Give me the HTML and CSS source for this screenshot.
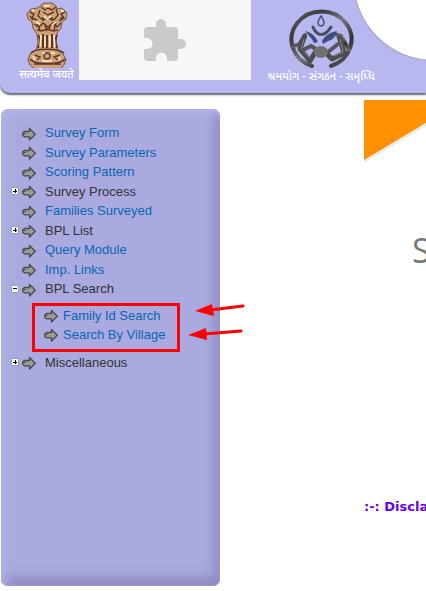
FILE: index.html
```html
<!DOCTYPE html>
<html lang="en">

<head>
  <meta charset="UTF-8">
  <meta name="viewport" content="width=device-width, initial-scale=1.0">
  <title>BPL Survey</title>
  <link rel="stylesheet" href="styles.css">
</head>

<body>
  <!-- shared icons -->
  <svg class="defs" aria-hidden="true">
    <linearGradient id="metal" x1="0" y1="0" x2="1" y2="1">
      <stop offset="0" stop-color="#666" />
      <stop offset=".25" stop-color="#3a3a3c" />
      <stop offset=".5" stop-color="#77777c" />
      <stop offset=".75" stop-color="#333" />
      <stop offset="1" stop-color="#6a6a6e" />
    </linearGradient>
    <symbol id="arrow" viewBox="0 0 14 14">
      <path d="M2.500 4.500H7.500V1.500L13.300 7.200 7.500 13V9.800H2.500L.8 8.500V6z" fill="#9b9b98" stroke="#4a4a4a" stroke-width="1.300" stroke-linejoin="round" />
      <path d="M1 6.500h3" stroke="#555" stroke-width="1" />
    </symbol>
  </svg>

  <header class="header">
    <div class="emblem">
      <svg width="44" height="66" viewBox="0 0 44 66" role="img" aria-label="National emblem">
        <path d="M15 4l4-3h8l4 3 1 3 5-1 5 5-1 6-4 3-1 6-4 5-1 9 2 9 5 3 3 5-2 6-5 5H11l-6-5-2-5 2-6 6-4 2-7-1-9-4-6-1-6-4-3-1-5 4-5 7-1z" fill="#cda377" stroke="#765544" stroke-width="1" />
        <g fill="none" stroke="#5f3528" stroke-width="1.400">
          <path d="M16 5l4 3 3-2 4 2 4-3M18 10l5 3 6-3M15 8l-2 6 5 4 5-2 6 2 4-5-2-6M5 10l4 2-2 4 5 2M40 10l-4 2 3 4-5 3M9 22l5 3 4-4 5 4 5-4 4 4 4-4M12 28l5 1 5-2 6 2 5-1" />
          <path d="M5 14l3 4M38 14l-3 4M18 15v4M27 15v4M12 22l3 6M31 21l-2 7M20 23l2 6M25 23l-1 5" />
          <path d="M13 33c3 4 3 8 0 13M18 32v14M22 33v13M27 32v14M32 33c-2 4-2 8 0 13" stroke-width="2" />
          <path d="M6 51c4-5 28-5 33 0M5 57c4 6 31 6 35 0M9 62h27" />
          <circle cx="22" cy="54" r="3" />
          <path d="M10 53l5 2-3 3M35 53l-6 2 4 3" />
        </g>
        <g fill="none" stroke="#fff0cf" stroke-width="1.500">
          <path d="M19 4h6M19 14l3 3 4-3M7 8l2 1M36 9l3 0M11 20l4 2M31 20l-4 3M16 33l-1 12M20 34v11M25 34v11M29 33l1 12M8 54l2 4M17 51l3 0M26 51h4M35 55l-1 3M17 59h10" />
        </g>
      </svg>
      <span class="motto" lang="hi">सत्यमेव जयते</span>
    </div>

    <div class="plugin">
      <svg width="42" height="42" viewBox="0 0 42 42" role="img" aria-label="Plugin">
        <path d="M4 8h8V5a5 5 0 0 1 10 0v3h8a4 4 0 0 1 4 4v8h3a5 5 0 0 1 0 10h-3v8a4 4 0 0 1-4 4h-7v-3a5.500 5.500 0 0 0-11 0v3H4a4 4 0 0 1-4-4v-8h3a5.500 5.500 0 0 0 0-11H0v-7a4 4 0 0 1 4-4z" fill="#cacaca" />
      </svg>
    </div>

    <div class="logo">
      <svg width="66" height="62" viewBox="0 0 66 62" role="img" aria-label="Department logo">
        <path d="M24 58A30 28 0 1 1 43 58" fill="none" stroke="url(#metal)" stroke-width="4" stroke-linecap="round" />
        <path d="M33 8c-4 6-4 9 0 10 4-1 4-4 0-10z" fill="none" stroke="#4c5378" stroke-width="1.500" />
        <path d="M25 19c4 10 12 10 18 0" fill="none" stroke="#4b4c5c" stroke-width="3" stroke-linecap="round" />
        <path d="M17 23c5 1 10 4 13 11l-4 1c-2-5-6-8-9-12z" fill="#3b4d80" />
        <path d="M49 23c-6 1-12 4-15 10l1 3 5-3c5-1 8-5 9-10z" fill="#3f4f7c" />
        <path d="M4 38l7-1 6-10M49 27l4 1 8 14" fill="none" stroke="url(#metal)" stroke-width="4" stroke-linecap="round" stroke-linejoin="round" />
        <path d="M17 27l-5 14 10 12 6-10M51 28l5 17-12 6-6-6" fill="none" stroke="#4d4d50" stroke-width="5" stroke-linejoin="round" />
        <path d="M16 31l-3 10 9 9M52 31l3 13-9 4" fill="none" stroke="#888" stroke-width="1" />
        <path d="M15 42l8-4 5 3M50 36l-10 8" fill="none" stroke="#55555a" stroke-width="4" stroke-linecap="round" />
        <ellipse cx="33" cy="44" rx="7" ry="6" fill="#707074" />
      </svg>
      <span class="motto" lang="gu">શ્રમયોગ - સંગઠન - સમૃધ્ધિ</span>
    </div>
    <div class="curve"></div>
  </header>

  <div class="main">
    <nav class="sidebar">
      <ul class="menu">
        <li><div class="row"><svg class="icon"><use href="#arrow" /></svg><a href="#">Survey Form</a></div></li>
        <li><div class="row"><svg class="icon"><use href="#arrow" /></svg><a href="#">Survey Parameters</a></div></li>
        <li><div class="row"><svg class="icon"><use href="#arrow" /></svg><a href="#">Scoring Pattern</a></div></li>
        <li><div class="row"><button class="toggle" aria-label="Expand Survey Process"></button><svg class="icon"><use href="#arrow" /></svg><span>Survey Process</span></div></li>
        <li><div class="row"><svg class="icon"><use href="#arrow" /></svg><a href="#">Families Surveyed</a></div></li>
        <li><div class="row"><button class="toggle" aria-label="Expand BPL List"></button><svg class="icon"><use href="#arrow" /></svg><span>BPL List</span></div></li>
        <li><div class="row"><svg class="icon"><use href="#arrow" /></svg><a href="#">Query Module</a></div></li>
        <li><div class="row"><svg class="icon"><use href="#arrow" /></svg><a href="#">Imp. Links</a></div></li>
        <li>
          <div class="row"><button class="toggle open" aria-label="Collapse BPL Search"></button><svg class="icon"><use href="#arrow" /></svg><span>BPL Search</span></div>
          <div class="submenu">
            <ul>
              <li><svg class="icon"><use href="#arrow" /></svg><a href="#">Family Id Search</a></li>
              <li><svg class="icon"><use href="#arrow" /></svg><a href="#">Search By Village</a></li>
            </ul>
            <svg class="pointers" width="60" height="40" viewBox="0 0 60 40" aria-hidden="true">
              <path d="M22 10l33-4M16 34l37-3" stroke="#fe0000" stroke-width="3" stroke-linecap="round" />
              <path d="M7 11l17-7 2 12zM0 35l18-7 1 12z" fill="#fe0000" />
            </svg>
          </div>
        </li>
        <li><div class="row"><button class="toggle" aria-label="Expand Miscellaneous"></button><svg class="icon"><use href="#arrow" /></svg><span>Miscellaneous</span></div></li>
      </ul>
    </nav>

    <main class="content">
      <svg class="corner" width="160" height="100" viewBox="0 0 160 100" aria-hidden="true">
        <path d="M0 0h106L0 63z" fill="#e9ebea" />
        <path d="M0 0h100L0 60z" fill="#ff9000" />
      </svg>
      <h1>S</h1>
      <p class="disclaimer">:-: Discla</p>
    </main>
  </div>
</body>

</html>
```

FILE: styles.css
```css
* {
  box-sizing: border-box;
}

body {
  margin: 0;
  background-color: #fff;
  font-family: Arial, "Liberation Sans", sans-serif;
  font-size: 13px;
  overflow-x: hidden;
}

ul {
  list-style: none;
  margin: 0;
  padding: 0;
}

.defs {
  position: absolute;
  width: 0;
  height: 0;
}

/* header */
.header {
  position: relative;
  display: flex;
  height: 93px;
  overflow: clip;
  overflow-clip-margin: 4px;
  background-color: #b9b7ef;
  border-bottom-left-radius: 10px;
  box-shadow: 0 2px 2px #666;
}

.emblem {
  width: 79px;
  flex-shrink: 0;
  display: flex;
  flex-direction: column;
  align-items: center;
  padding: 2px 0 0 14px;
}

.motto {
  color: #fff;
  font-family: "Noto Sans Devanagari", "Noto Sans Gujarati", "Noto Sans", sans-serif;
  font-size: 11px;
  font-weight: 500;
  line-height: 14px;
  white-space: nowrap;
}

.plugin {
  width: 172px;
  height: 80px;
  flex-shrink: 0;
  display: flex;
  align-items: center;
  justify-content: center;
  background-color: #f7f7f7;
}

.logo {
  width: 140px;
  flex-shrink: 0;
  display: flex;
  flex-direction: column;
  align-items: center;
  padding-top: 8px;
}

.curve {
  position: absolute;
  top: -100px;
  left: 354px;
  width: 160px;
  height: 160px;
  background-color: #fff;
  border-radius: 50%;
  box-shadow: 0 0 2px #777;
}

/* layout */
.main {
  display: flex;
  padding: 7px 0 5px 1px;
}

.sidebar {
  width: 219px;
  min-height: 477px;
  flex-shrink: 0;
  margin-top: 9px;
  padding: 14px 0 0 10px;
  border-radius: 7px;
  background-color: #aaaae0;
  box-shadow: inset 4px 4px 10px #b4b4e8, inset -5px -8px 12px #8c88bc;
}

/* menu */
.menu {
  color: #333;
  line-height: 1.5;
}

.menu a {
  color: #0866b4;
  text-decoration: none;
}

.row {
  display: grid;
  grid-template-columns: 8px 14px 1fr;
  align-items: center;
  column-gap: 3px;
}

.row .icon {
  grid-column: 2;
}

.row a,
.row span {
  padding-left: 6px;
}

.icon {
  width: 14px;
  height: 14px;
  margin-top: 2px;
}

.toggle {
  width: 8px;
  height: 8px;
  padding: 0;
  border: 1px solid #8fa0b8;
  border-radius: 1px;
  background: linear-gradient(#000, #000) center / 4px 1px no-repeat,
    linear-gradient(#000, #000) center / 1px 4px no-repeat, #fff;
}

.toggle.open {
  background: linear-gradient(#000, #000) center / 4px 1px no-repeat, #fff;
}

.submenu {
  position: relative;
  width: 148px;
  margin: 4px 0 1px 21px;
  border: 3px solid #fe0000;
  padding: 0 0 5px 9px;
  line-height: 19px;
}

.submenu li {
  display: flex;
  align-items: center;
  gap: 5px;
}

.pointers {
  position: absolute;
  left: 153px;
  top: -6px;
}

/* content */
.content {
  flex: 1;
  min-width: 0;
  margin-left: 144px;
  overflow: hidden;
}

.corner {
  display: block;
}

.content h1 {
  margin: 26px 0 0 48px;
  color: #777;
  font-family: "Open Sans", sans-serif;
  font-size: 34px;
  font-weight: 500;
  line-height: 48px;
}

.disclaimer {
  margin: 225px 0 0;
  color: #60e;
  font-family: Verdana, "DejaVu Sans", sans-serif;
  font-size: 13px;
  font-weight: 700;
  line-height: 16px;
  white-space: nowrap;
}
```
